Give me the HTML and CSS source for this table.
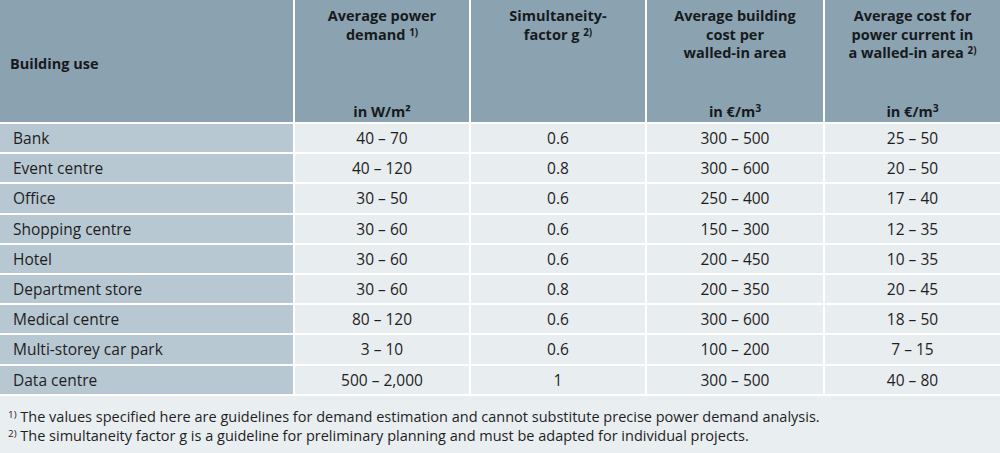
FILE: index.html
```html
<!DOCTYPE html>
<html lang="en">
<head>
<meta charset="utf-8">
<title>Building use table</title>
<link rel="stylesheet" href="styles.css">
</head>
<body>
<div class="page">
  <div class="table">
    <div class="hd hd-first"><span>Building use</span></div>
    <div class="hd"><div class="hd-title">Average power<br>demand <sup>1)</sup></div><div class="hd-unit">in W/m²</div></div>
    <div class="hd"><div class="hd-title">Simultaneity-<br>factor g <sup>2)</sup></div><div class="hd-unit"></div></div>
    <div class="hd"><div class="hd-title">Average building<br>cost per<br>walled-in area</div><div class="hd-unit">in €/m<span class="exp">3</span></div></div>
    <div class="hd"><div class="hd-title">Average cost for<br>power current in<br>a walled-in area <sup>2)</sup></div><div class="hd-unit">in €/m<span class="exp">3</span></div></div>

    <div class="c name">Bank</div><div class="c">40 – 70</div><div class="c">0.6</div><div class="c">300 – 500</div><div class="c">25 – 50</div>
    <div class="c name">Event centre</div><div class="c">40 – 120</div><div class="c">0.8</div><div class="c">300 – 600</div><div class="c">20 – 50</div>
    <div class="c name">Office</div><div class="c">30 – 50</div><div class="c">0.6</div><div class="c">250 – 400</div><div class="c">17 – 40</div>
    <div class="c name">Shopping centre</div><div class="c">30 – 60</div><div class="c">0.6</div><div class="c">150 – 300</div><div class="c">12 – 35</div>
    <div class="c name">Hotel</div><div class="c">30 – 60</div><div class="c">0.6</div><div class="c">200 – 450</div><div class="c">10 – 35</div>
    <div class="c name">Department store</div><div class="c">30 – 60</div><div class="c">0.8</div><div class="c">200 – 350</div><div class="c">20 – 45</div>
    <div class="c name">Medical centre</div><div class="c">80 – 120</div><div class="c">0.6</div><div class="c">300 – 600</div><div class="c">18 – 50</div>
    <div class="c name">Multi-storey car park</div><div class="c">3 – 10</div><div class="c">0.6</div><div class="c">100 – 200</div><div class="c">7 – 15</div>
    <div class="c name">Data centre</div><div class="c">500 – 2,000</div><div class="c">1</div><div class="c">300 – 500</div><div class="c">40 – 80</div>
  </div>
  <div class="notes">
    <p><sup>1)</sup> The values specified here are guidelines for demand estimation and cannot substitute precise power demand analysis.</p>
    <p><sup>2)</sup> The simultaneity factor g is a guideline for preliminary planning and must be adapted for individual projects.</p>
  </div>
</div>
</body>
</html>
```
FILE: styles.css
```css
html, body {
  margin: 0;
  padding: 0;
  background: #ffffff;
}
body {
  font-family: "Open Sans", "Noto Sans", sans-serif;
  color: #1e1e1e;
  width: 1000px;
  height: 453px;
  overflow: hidden;
}
.page {
  background: #e9eef1;
  height: 453px;
}
.table {
  display: grid;
  grid-template-columns: 293px 174px 174px 176px 1fr;
  grid-template-rows: 122px repeat(9, 28.2px);
  gap: 2px;
  background: #ffffff;
  padding-bottom: 2px;
}
.hd {
  background: #8ba2b0;
  font-weight: 700;
  font-size: 14.5px;
  line-height: 18.5px;
  color: #161a1d;
  display: flex;
  flex-direction: column;
  justify-content: space-between;
  align-items: center;
  text-align: center;
  padding: 7px 4px 1px;
  box-sizing: border-box;
}
.hd-first {
  align-items: flex-start;
  justify-content: center;
  padding-left: 10px;
  padding-top: 8px;
}
.hd sup, .notes sup {
  font-size: 0.68em;
  vertical-align: 0.45em;
  line-height: 0;
}
.hd .exp {
  font-size: 0.72em;
  vertical-align: 0.45em;
  line-height: 0;
}
.hd-unit {
  min-height: 18px;
}
.c {
  background: #e8edf0;
  font-size: 15.5px;
  line-height: 29px;
  text-align: center;
  color: #1e1e1e;
  white-space: nowrap;
}
.c.name {
  background: #b8c8d3;
  text-align: left;
  padding-left: 13px;
}
.notes {
  padding: 11px 0 0 8px;
  font-size: 14.5px;
  line-height: 19px;
  color: #1e1e1e;
}
.notes p {
  margin: 0;
}
```
